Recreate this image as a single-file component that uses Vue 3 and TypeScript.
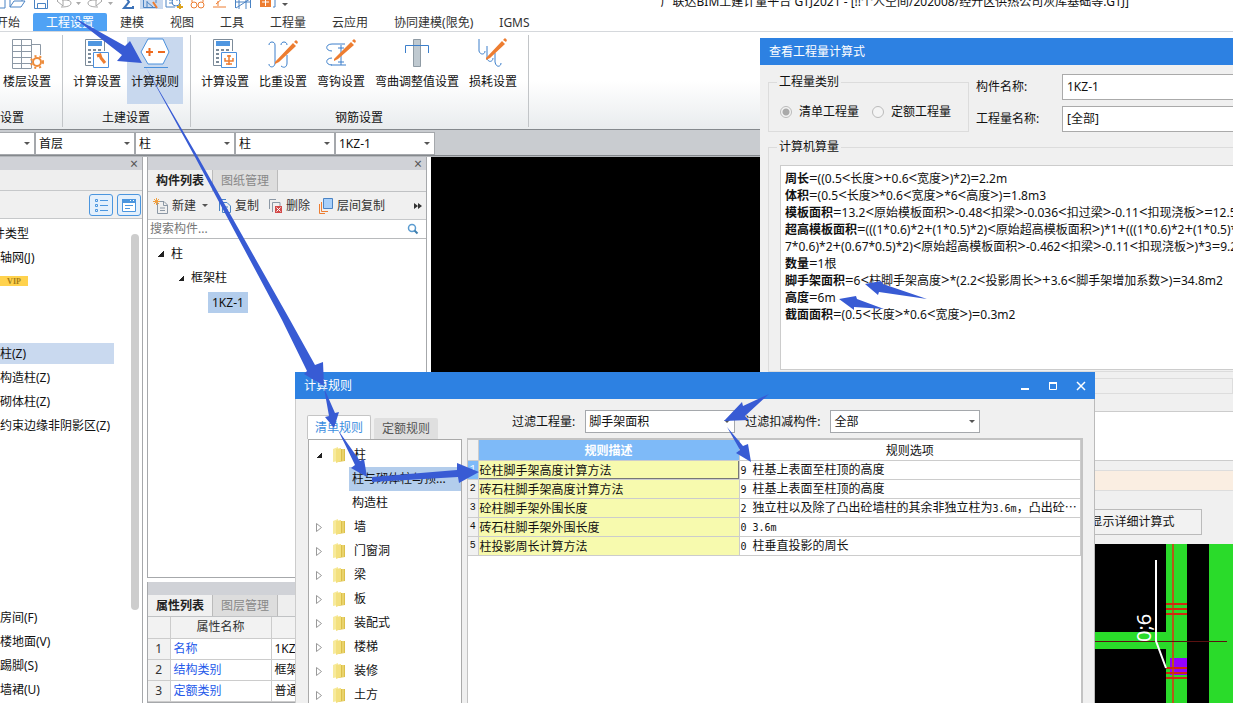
<script setup lang="ts">
import { ref } from 'vue'

interface Tool { label: string; icon: string; wide?: boolean; active?: boolean }
interface Group { title: string; cls: string; tools: Tool[] }
interface Formula { name: string; expr: string }
interface Rule { desc: string; opt: string; value: string }

const menus = ['开始', '工程设置', '建模', '视图', '工具', '工程量', '云应用', '协同建模(限免)', 'IGMS']
const activeMenu = ref('工程设置')

const groups: Group[] = [
  { title: '设置', cls: 'g-first', tools: [{ label: '楼层设置', icon: 'floor' }] },
  { title: '土建设置', cls: '', tools: [{ label: '计算设置', icon: 'calc' }, { label: '计算规则', icon: 'rule', active: true }] },
  {
    title: '钢筋设置', cls: '', tools: [
      { label: '计算设置', icon: 'calc2' }, { label: '比重设置', icon: 'weight' }, { label: '弯钩设置', icon: 'hook' },
      { label: '弯曲调整值设置', icon: 'bend', wide: true }, { label: '损耗设置', icon: 'loss' },
    ],
  },
]

const combos = [
  { label: '工程', value: '' }, { label: '楼层', value: '首层' }, { label: '类别', value: '柱' },
  { label: '类型', value: '柱' }, { label: '构件', value: '1KZ-1' },
]

const navItems = ['构件类型', '轴网(J)', 'VIP', '', '', '柱(Z)', '构造柱(Z)', '砌体柱(Z)', '约束边缘非阴影区(Z)',
  '', '', '', '', '', '', '', '房间(F)', '楼地面(V)', '踢脚(S)', '墙裙(U)']

const props = [['名称', '1KZ-1'], ['结构类别', '框架柱'], ['定额类别', '普通柱'], ['', '']]

const formulas: Formula[] = [
  { name: '周长', expr: '=((0.5<长度>+0.6<宽度>)*2)=2.2m' },
  { name: '体积', expr: '=(0.5<长度>*0.6<宽度>*6<高度>)=1.8m3' },
  { name: '模板面积', expr: '=13.2<原始模板面积>-0.48<扣梁>-0.036<扣过梁>-0.11<扣现浇板>=12.574m2' },
  { name: '超高模板面积', expr: '=(((1*0.6)*2+(1*0.5)*2)<原始超高模板面积>)*1+(((1*0.6)*2+(1*0.5)*2)' },
  { name: '', expr: '7*0.6)*2+(0.67*0.5)*2)<原始超高模板面积>-0.462<扣梁>-0.11<扣现浇板>)*3=9.284m2' },
  { name: '数量', expr: '=1根' },
  { name: '脚手架面积', expr: '=6<柱脚手架高度>*(2.2<投影周长>+3.6<脚手架增加系数>)=34.8m2' },
  { name: '高度', expr: '=6m' },
  { name: '截面面积', expr: '=(0.5<长度>*0.6<宽度>)=0.3m2' },
]
const pieces = (s: string): string[] => s.split(/([<>=+]+)/).filter(Boolean)
const isOp = (s: string): boolean => /^[<>=+]+$/.test(s)

const treeItems = ['墙', '门窗洞', '梁', '板', '装配式', '楼梯', '装修', '土方']

const rules: Rule[] = [
  { desc: '砼柱脚手架高度计算方法', opt: '9', value: '柱基上表面至柱顶的高度' },
  { desc: '砖石柱脚手架高度计算方法', opt: '9', value: '柱基上表面至柱顶的高度' },
  { desc: '砼柱脚手架外围长度', opt: '2', value: '独立柱以及除了凸出砼墙柱的其余非独立柱为3.6m，凸出砼…' },
  { desc: '砖石柱脚手架外围长度', opt: '0', value: '3.6m' },
  { desc: '柱投影周长计算方法', opt: '0', value: '柱垂直投影的周长' },
]
const latinPieces = (s: string): string[] => s.split(/([0-9.a-z]+)/).filter(Boolean)
const isLatin = (s: string): boolean => /^[0-9.a-z]+$/.test(s)

const kind = ref('list')

const arrows = [
  '73,17 125,46 130,41 142,63 117,61 122,55',
  '145,66 198,157 290,320 315,365 323,362 324,386 304,374 307,371 282,320 195,157',
  '324,388 335,413 339,412 334,428 325,417 329,416',
  '338,430 360,461 364,459 367,477 351,468 355,465',
  '372,477 457,470 457,463 479,472 459,483 458,477 372,482',
  '769,394 743,406 742,402 724,421 749,420 745,416',
  '727,427 743,446 748,444 751,462 736,453 740,450',
  '927,299 883,284 881,281 865,284 878,295 879,292',
  '884,309 857,299 856,296 839,299 854,310 854,307',
]
</script>

<template>
  <div class="app">
    <header class="quick">
      <div class="quick-icons">
        <svg width="300" height="16" viewBox="0 0 300 16" fill="none" stroke="#4a83c4">
          <path d="M-3 3H5V15H-3" />
          <path d="M10 14V3H15L17 5H22V8M10 14L14 8H25L21 14Z" />
          <path d="M34.500 2.500H47.500V15.500H34.500ZM37.500 15V10.500H45.500V15" />
          <g stroke="#a6a6a6"><path d="M61 14C67 14 71 13 71 10C71 7 66 7 62 7M62 2V7M57 8L63 2V13Z" /><path d="M98 14C92 14 88 13 88 10C88 7 93 7 97 7M102 8L96 2V13Z" /></g>
          <path d="M76 9H81L78.500 12ZM108 9H113L110.500 12Z" fill="#aaa" stroke="none" />
          <path d="M133 13V15H124L129 9L124 2H133" stroke="#3c72b8" stroke-width="2" />
          <rect x="140" y="0" width="23" height="18" fill="#c9d9ef" stroke="none" />
          <path d="M143.500 2V14.500H157M143 5H156V10M147 8V14M147 9L153 14" />
          <path d="M153 9L157 15" stroke="#ed7d31" stroke-width="2" />
          <path d="M166 5V14H175M169 7H173M169 10H173M177 3V8" /><circle cx="176" cy="9" r="4" /><path d="M180 11V17M177 14H183" stroke="#dca21d" stroke-width="2" />
          <g stroke="#ed7d31"><circle cx="194" cy="12" r="3" /><circle cx="201" cy="12" r="3" /><path d="M192 9V4H196M199 4H203V9M213 14H226" /><path d="M216 11L223 5M218 8V13" /></g>
          <path d="M235.500 15V6H250.500V15M235 9H251M239 3V16M246 3V16M236 15L250 6" />
          <path d="M260 3H271V14H260Z" fill="#ed7d31" stroke="none" /><path d="M262 9H269M265.500 5V13" stroke="#fff" /><path d="M273 14H275V3" />
          <path d="M282 10H288L285 13Z" fill="#555" stroke="none" />
        </svg>
      </div>
      <span class="app-title">广联达BIM土建计量平台 GTJ2021 - [!!个人空间/202008/经开区供热公司灰库基础等.GTJ]</span>
    </header>

    <nav class="menus">
      <button v-for="m in menus" :key="m" type="button" :class="{ on: m === activeMenu }" @click="activeMenu = m">{{ m }}</button>
    </nav>

    <section class="ribbon">
      <div v-for="g in groups" :key="g.title" class="group" :class="g.cls">
        <div class="tools">
          <button v-for="(t, i) in g.tools" :key="i" type="button" class="tool" :class="{ wide: t.wide, on: t.active }">
            <svg width="34" height="32" viewBox="0 0 34 32" fill="none">
              <g v-if="t.icon === 'floor'">
                <path d="M2.500 2.500H21.500V31M2.500 2.500V31.500H21.500M2 8.500H21M2 14.500H21M2 20.500H21M2 26.500H21M11.500 2.500V31.500M21.500 7.500H30.500V18" stroke="#8c98a5" />
                <circle cx="27" cy="25" r="4" stroke="#ed8b3a" stroke-width="2" />
                <circle cx="27" cy="25" r="6" stroke="#ed8b3a" stroke-width="2" stroke-dasharray="2 3" />
              </g>
              <g v-else-if="t.icon === 'calc' || t.icon === 'calc2'">
                <path d="M5.500 2.500H24.500V14M5.500 2.500V28.500H13" stroke="#7c8b99" />
                <path d="M8 4H22V9H8Z" fill="#4f96e0" />
                <path d="M8 12H11V14H8ZM13 12H16V14H13ZM18 12H21V14H18ZM8 16H11V18H8ZM8 20H11V22H8ZM8 24H11V26H8Z" fill="#7c8b99" />
                <path d="M13.500 15.500H28.500V30.500H13.500Z" fill="#fff" stroke="#4a8fdd" />
                <path v-if="t.icon === 'calc'" d="M17 19L20 18L21 21L25 26" stroke="#ed7d31" stroke-width="3" />
                <path v-else d="M21 18V28M17 21V24H25V21M18 27H24M19 19H23" stroke="#ed7d31" stroke-width="1.500" />
              </g>
              <g v-else-if="t.icon === 'rule'">
                <path d="M3 15L10 2H25L31 15L25 27H10Z" fill="#fff" stroke="#4a90dc" />
                <path d="M6 30.500H30" stroke="#4a90dc" />
                <path d="M8 15H15M11.500 11V19M20 15H27" stroke="#ed6a1f" stroke-width="2" />
              </g>
              <g v-else-if="t.icon === 'weight'">
                <path d="M3 8C3 4 9 4 9 8V26C9 31 3 31 3 27M15 8C15 4 21 4 21 8M15 29C19 32 21 29 21 26V18" stroke="#3c7fcb" />
                <path d="M9 25L27 6L30 9L13 25L9 27ZM28 5L30 3L32 5L31 7Z" fill="#ed7d31" />
              </g>
              <g v-else-if="t.icon === 'hook'">
                <path d="M8 14C1 14 1 7 8 7H21M8 28C1 28 1 21 8 21M7 28H22M17 8V28M14 11H20M14 25H20" stroke="#3c7fcb" />
                <path d="M10 22L27 5L30 8L14 22L10 24ZM28 4L30 2L32 4L31 6Z" fill="#ed7d31" />
              </g>
              <g v-else-if="t.icon === 'bend'">
                <path d="M13.500 2.500H20.500V29.500H13.500Z" fill="#bfc9d0" stroke="#8f9ba4" />
                <path d="M5.500 16V8.500H28.500V16" stroke="#3c7fcb" />
              </g>
              <g v-else>
                <path d="M3 2V14C4 18 9 18 9 14M11 9V21C12 26 17 25 17 21M19 16V25C20 31 25 30 25 26" stroke="#3c7fcb" />
                <path d="M10 21L26 4L29 7L14 21L10 23ZM27 3L29 1L31 3L30 5Z" fill="#ed7d31" />
              </g>
            </svg>
            <span>{{ t.label }}</span>
          </button>
        </div>
        <div class="group-title">{{ g.title }}</div>
      </div>
    </section>

    <section class="combos">
      <span v-for="c in combos" :key="c.label" class="combo">
        <select :aria-label="c.label"><option>{{ c.value }}</option></select>
      </span>
    </section>

    <main class="work">
      <aside class="left">
        <div class="strip"><button type="button" class="x" aria-label="关闭导航">×</button></div>
        <div class="strip2"></div>
        <div class="views">
          <button type="button" aria-label="列表视图">
            <svg width="16" height="16" viewBox="0 0 16 16" stroke="#4b96df" fill="none"><path d="M7 3.500H15M7 8.500H15M7 13.500H15M2.500 2.500H4.500V4.500H2.500ZM2.500 7.500H4.500V9.500H2.500ZM2.500 12.500H4.500V14.500H2.500Z" /></svg>
          </button>
          <button type="button" aria-label="卡片视图">
            <svg width="16" height="16" viewBox="0 0 16 16" stroke="#4b96df" fill="none"><path d="M1.500 2.500H14.500V14.500H1.500Z" fill="#fff" /><path d="M1 4H15" stroke-width="4" /><path d="M9 3.500H10M12 3.500H13" stroke="#fff" /><path d="M4 8.500H12M4 11.500H9" /></svg>
          </button>
        </div>
        <div class="nav">
          <ul>
            <li v-for="(n, i) in navItems" :key="i" :class="{ cut: i === 0, on: i === 5 }">
              <span v-if="n === 'VIP'" class="vip">VIP</span><template v-else>{{ n }}</template>
            </li>
          </ul>
          <div class="thumb"></div>
        </div>
      </aside>

      <section class="mid">
        <div class="mid-top">
          <div class="strip"><button type="button" class="x" aria-label="关闭列表">×</button></div>
          <div class="tabs"><button type="button" class="on">构件列表</button><button type="button">图纸管理</button></div>
          <div class="bar">
            <button type="button">
              <svg width="16" height="16" viewBox="0 0 16 16" fill="none"><path d="M4.500 3.500H11L14.500 7V15.500H4.500ZM10.500 4V7.500H14M7 10H12M7 12.500H12" stroke="#8c98a5" /><path d="M1 1L6 6M6 1L1 6M3.500 0V7M0 3.500H7" stroke="#f0a040" /></svg>
              新建</button>
            <i class="caret"></i>
            <button type="button" class="b-copy">
              <svg width="14" height="16" viewBox="0 0 14 16"><path d="M1.500 13V1.500H8M4.500 4.500H9L12.500 8V14.500H4.500ZM7 9H10M7 12H10" fill="none" stroke="#4a83c4" /></svg>
              复制</button>
            <button type="button" class="b-del">
              <svg width="15" height="16" viewBox="0 0 15 16" fill="none"><path d="M1.500 11V1.500H8M4.500 14V4.500H12V8" stroke="#8c98a5" /><path d="M7 8H14V15H7Z" fill="#d34b4b" /><path d="M8.500 9.500L12.500 13.500M12.500 9.500L8.500 13.500" stroke="#fff" /></svg>
              删除</button>
            <button type="button" class="b-layer">
              <svg width="15" height="16" viewBox="0 0 15 16" fill="none"><path d="M.5 6V15.500H6M2.500 4V13.500H9" stroke="#ed7d31" /><path d="M4.500 .5H13.500V10.500H4.500Z" fill="#a9d0fa" stroke="#4a83c4" /></svg>
              层间复制</button>
            <button type="button" class="more" aria-label="更多"><svg width="8" height="6" viewBox="0 0 8 6"><path d="M0 0L4 3L0 6ZM4 0L8 3L4 6Z" fill="#333" /></svg></button>
          </div>
          <div class="search">
            <input type="text" placeholder="搜索构件..." aria-label="搜索构件" />
            <svg width="12" height="12" viewBox="0 0 12 12" fill="none"><circle cx="5" cy="5" r="3.500" stroke="#5a9bd0" stroke-width="1.500" /><path d="M7.500 7.500L10.500 10.500" stroke="#3f7fae" stroke-width="2" /></svg>
          </div>
          <ul class="mtree">
            <li><i class="open"></i>柱</li>
            <li class="l2"><i class="open"></i>框架柱</li>
            <li class="l3"><span>1KZ-1</span></li>
          </ul>
        </div>
        <div class="mid-bottom">
          <div class="strip"></div>
          <div class="tabs"><button type="button" class="on">属性列表</button><button type="button">图层管理</button></div>
          <table class="props">
            <thead><tr><th class="n"></th><th class="k">属性名称</th><th>属性值</th></tr></thead>
            <tbody>
              <tr v-for="(p, i) in props" :key="i"><th class="n">{{ i + 1 }}</th><td class="k link">{{ p[0] }}</td><td>{{ p[1] }}</td></tr>
            </tbody>
          </table>
        </div>
      </section>
      <div class="viewport"></div>
    </main>

    <section class="win quantity" role="dialog" aria-label="查看工程量计算式">
      <h2>查看工程量计算式</h2>
      <div class="q-head">
        <fieldset>
          <legend>工程量类别</legend>
          <label><input v-model="kind" type="radio" name="kind" value="list" />清单工程量</label>
          <label><input v-model="kind" type="radio" name="kind" value="quota" />定额工程量</label>
        </fieldset>
        <div class="q-form">
          <label for="q-name">构件名称:</label><select id="q-name"><option>1KZ-1</option></select>
          <label for="q-kind">工程量名称:</label><select id="q-kind"><option>[全部]</option></select>
        </div>
      </div>
      <fieldset class="calc">
        <legend>计算机算量</legend>
        <div class="paper">
          <p v-for="(f, i) in formulas" :key="i"><b>{{ f.name }}</b><span v-for="(s, j) in pieces(f.expr)" :key="j" :class="{ op: isOp(s) }">{{ s }}</span></p>
        </div>
      </fieldset>
      <div class="band"></div>
      <div class="result"></div>
      <div class="peach"></div>
      <div class="q-foot"><button type="button">显示详细计算式</button></div>
      <svg class="cad" width="100%" height="160">
        <path d="M0 88H406V105H0ZM406 0H427V160H406ZM449 0H1200V160H449Z" fill="#2adb2a" />
        <path d="M410 114H427V131H410Z" fill="#9500ff" />
        <path d="M413 0V160" stroke="#b55a18" stroke-width="2" />
        <path d="M406 60H427M406 65H427M406 70H427M406 124H427M406 129H427M406 134H427" stroke="#d02a10" stroke-width="2" />
        <path d="M0 97.500H467" stroke="#5a1010" />
        <path d="M396 16V97L406 124" stroke="#fff" stroke-width="2" fill="none" />
        <text transform="translate(391 98) rotate(-90)" fill="#fff" font-size="20">0;6</text>
      </svg>
    </section>

    <section class="win rules" role="dialog" aria-label="计算规则">
      <header>
        <h2>计算规则</h2>
        <button type="button" aria-label="最小化"><svg width="10" height="10" viewBox="0 0 10 10"><path d="M1 8H9" stroke="#fff" stroke-width="2" /></svg></button>
        <button type="button" aria-label="最大化"><svg width="10" height="10" viewBox="0 0 10 10" fill="none"><path d="M1.500 2V8.500H8.500V2" stroke="#fff" /><path d="M1 2H9" stroke="#fff" stroke-width="2" /></svg></button>
        <button type="button" aria-label="关闭"><svg width="10" height="10" viewBox="0 0 10 10"><path d="M1 1L9 9M9 1L1 9" stroke="#fff" stroke-width="1.500" /></svg></button>
      </header>
      <div class="r-body">
        <div class="r-left">
          <div class="r-tabs"><button type="button" class="on">清单规则</button><button type="button">定额规则</button></div>
          <ul class="rtree">
            <li><i class="open"></i><svg class="folder" width="14" height="16" viewBox="0 0 14 16"><path d="M1 2L6 0V14L1 15Z" fill="#f7ea9c" /><path d="M6 2H13V14L6 15Z" fill="#dcc04a" /><path d="M4 2L9 1V14L4 16Z" fill="#f3e07e" /><path d="M11 2V14" stroke="#f6e58e" /></svg>柱</li>
            <li class="sub"><span class="on">柱与砌体柱与预...</span></li>
            <li class="sub"><span>构造柱</span></li>
            <li v-for="t in treeItems" :key="t">
              <svg class="closed" width="6" height="9" viewBox="0 0 6 9"><path d="M.5 .5L5.500 4.500L.5 8.500Z" fill="#fff" stroke="#999" /></svg>
              <svg class="folder" width="14" height="16" viewBox="0 0 14 16"><path d="M1 2L6 0V14L1 15Z" fill="#f7ea9c" /><path d="M6 2H13V14L6 15Z" fill="#dcc04a" /><path d="M4 2L9 1V14L4 16Z" fill="#f3e07e" /><path d="M11 2V14" stroke="#f6e58e" /></svg>{{ t }}
            </li>
          </ul>
        </div>
        <div class="r-right">
          <div class="filters">
            <label for="f-q">过滤工程量:</label>
            <span class="combo"><select id="f-q"><option>脚手架面积</option></select></span>
            <label for="f-c">过滤扣减构件:</label>
            <span class="combo"><select id="f-c"><option>全部</option></select></span>
          </div>
          <div class="grid">
            <table>
              <thead><tr><th class="i"></th><th class="d">规则描述</th><th class="o">规则选项</th></tr></thead>
              <tbody>
                <tr v-for="(r, i) in rules" :key="i" :class="{ sel: i === 0 }">
                  <th class="i">{{ i + 1 }}</th>
                  <td class="d">{{ r.desc }}</td>
                  <td class="o"><div><span class="lat num">{{ r.opt }}</span><span v-for="(s, j) in latinPieces(r.value)" :key="j" :class="{ lat: isLatin(s) }">{{ s }}</span></div></td>
                </tr>
              </tbody>
            </table>
          </div>
        </div>
      </div>
    </section>

    <svg class="marks" width="1233" height="703" viewBox="0 0 1233 703" aria-hidden="true">
      <polygon v-for="a in arrows" :key="a" :points="a" fill="#385bd4" />
    </svg>
  </div>
</template>

<style>
html, body { margin: 0; overflow: hidden; }
</style>

<style scoped>
.app {
  position: relative; display: flex; flex-direction: column; height: 100vh; overflow: hidden; background: #fff;
  font: 12px/16px "Noto Sans", "Noto Sans CJK SC", sans-serif; color: #111;
}
.app *, .app *::before, .app *::after { box-sizing: border-box; }
button, select, input { font: inherit; color: inherit; margin: 0; padding: 0; border: 0; background: none; border-radius: 0; }
select { appearance: none; }
ul { list-style: none; margin: 0; padding: 0; }
svg { display: block; flex: none; }
p, h2 { margin: 0; font-size: 12px; font-weight: 400; }

.quick { display: flex; align-items: flex-end; justify-content: space-between; height: 13px; flex: none; }
.quick-icons { padding-bottom: 4px; }
.app-title { line-height: 20px; margin: 0 104px 1px 0; white-space: nowrap; }

.menus { display: flex; height: 19px; flex: none; margin-left: -17px; border-bottom: 1px solid #d5d8dc; }
.menus button { padding: 0 13px; line-height: 18px; padding-top: 1px; color: #333; white-space: nowrap; }
.menus .on { background: #4fa2f5; color: #fff; border-radius: 2px 2px 0 0; }

.ribbon { display: flex; height: 98px; flex: none; background: linear-gradient(#fff 50%, #e9ecee); border-bottom: 1px solid #85898d; }
.group { display: flex; flex-direction: column; height: 92px; margin-top: 3px; padding: 2px 7px 0 6px; border-right: 1px solid #c2c5c8; }
.g-first { width: 63px; align-items: flex-end; }
.g-first .group-title { align-self: flex-start; margin-left: -6px; }
.tools { display: flex; gap: 2px; }
.tool { display: flex; flex-direction: column; align-items: center; width: 56px; height: 67px; white-space: nowrap; }
.tool.wide { width: 92px; }
.tool.on { background: #c8d8ee; }
.tool span { margin-top: 5px; }
.group-title { text-align: center; margin-top: 6px; }

.combos { display: flex; height: 26px; flex: none; padding-top: 2px; margin-left: -65px; background: #c9ccd0; border-bottom: 1px solid #85898d; }
.combo { position: relative; display: block; }
.combo select { display: block; width: 100%; height: 23px; padding: 0 3px; background: #fff; border: 1px solid #a5a8ac; }
.combo::after { content: ""; position: absolute; right: 5px; top: 10px; border: 3px solid transparent; border-top-color: #555; border-bottom: 0; }
.combos .combo { width: 100px; }

.work { display: flex; flex: 1; min-height: 0; border-top: 1px solid #b4b7bb; }
.strip { height: 13px; background: #d0d2d7; display: flex; justify-content: flex-end; align-items: center; padding-right: 4px; flex: none; }
.x { font-size: 14px; line-height: 12px; color: #555; }
.left { width: 143px; display: flex; flex-direction: column; flex: none; border-right: 1px solid #a6a8ab; }
.strip2 { height: 21px; background: #eee; border-bottom: 1px solid #c6c8ca; flex: none; }
.views { display: flex; justify-content: flex-end; align-items: center; gap: 4px; height: 28px; padding-right: 1px; background: #f0f0f0; border-bottom: 1px solid #c6c8ca; flex: none; }
.views button { width: 24px; height: 22px; display: grid; place-items: center; border: 1px solid #4b96df; border-radius: 3px; background: #e4f0fc; }
.nav { display: flex; justify-content: space-between; flex: 1; min-height: 0; padding-top: 3px; overflow: hidden; }
.nav ul { flex: 1; }
.nav li { height: 24px; line-height: 24px; white-space: nowrap; }
.nav .cut { margin-left: -19px; }
.nav .on { width: 114px; background: linear-gradient(#c9d9ef, #c9d9ef) 0 1px / 100% 21px no-repeat; }
.vip { display: block; width: 28px; height: 10px; margin-top: 6px; background: #ffd24d; color: #a37b17; font: bold 8px/11px "Liberation Serif", serif; text-align: center; }
.nav li:has(.vip) { display: flex; }
.thumb { width: 8px; height: 376px; margin: 12px 3px 0 0; border-radius: 4px; background: #cdcdcd; flex: none; }

.mid { width: 280px; margin-left: 4px; display: flex; flex-direction: column; flex: none; gap: 4px; }
.mid-top { display: flex; flex-direction: column; height: 421px; border: 1px solid #a6a8ab; border-top: 0; }
.mid-bottom { border: 1px solid #a6a8ab; border-top: 0; flex: 1; min-height: 0; overflow: hidden; }
.tabs { display: flex; height: 22px; background: #eee; border-bottom: 1px solid #c0c2c4; flex: none; }
.tabs button { width: 65px; color: #888; background: #ddd; border-right: 1px solid #bbb; }
.tabs .on { color: #222; font-weight: 700; background: #f0f0f0; }
.bar { display: flex; align-items: center; height: 28px; padding: 0 4px 0 5px; background: #f0f0f0; color: #333; border-bottom: 1px solid #c6c8ca; flex: none; }
.bar button { display: flex; align-items: center; gap: 3px; white-space: nowrap; }
.caret { margin: 0 10px 0 6px; border: 3px solid transparent; border-top-color: #555; border-bottom: 0; }
.b-del, .b-layer { margin-left: 9px; }
.bar .more { margin-left: auto; }
.search { display: flex; align-items: center; height: 19px; padding-right: 7px; border-bottom: 1px solid #b8babc; flex: none; }
.search input { flex: 1; min-width: 0; padding-left: 2px; outline: 0; }
.search input::placeholder { color: #777; opacity: 1; }
.mtree { padding: 3px 0 0 10px; }
.mtree li { display: flex; align-items: center; height: 24px; }
.mtree .l2 { padding-left: 20px; }
.mtree .l3 { padding-left: 50px; }
.l3 span { padding: 2px 4px; line-height: 17px; background: #b3cdec; }
.open { flex: none; width: 6px; height: 6px; margin-right: 7px; background: linear-gradient(135deg, transparent 50%, #222 50%); }
.props { width: 100%; table-layout: fixed; border-collapse: collapse; }
.props tr { height: 21px; }
.props th, .props td { padding: 0 3px; border: 1px solid #ccc; border-left: 0; border-top: 0; text-align: left; font-weight: 400; line-height: 16px; }
.props th { background: #f2f2f2; color: #333; text-align: center; }
.props .n { width: 22px; }
.props .k { width: 101px; }
.props .link { color: #2459ea; }
.viewport { flex: 1; margin-left: 4px; background: #000; }

.win { position: absolute; background: #f0f0f0; }
.win h2 { color: #fff; padding-left: 9px; line-height: 27px; }
.quantity { left: 760px; right: 0; top: 38px; bottom: 0; overflow: hidden; display: flex; flex-direction: column; }
.quantity > h2 { background: #2d81e2; flex: none; }
.q-head { display: flex; gap: 7px; padding: 9px 0 0 8px; flex: none; }
fieldset { min-width: 0; margin: 0; padding: 0; border: 1px solid #dcdcdc; }
legend { padding: 0 2px; margin-left: -3px; line-height: 16px; }
.q-head fieldset { width: 201px; height: 58px; padding: 11px 0 0 11px; display: flex; gap: 13px; white-space: nowrap; }
.q-head fieldset label { display: flex; align-items: center; gap: 7px; height: 22px; }
.q-head input { appearance: none; width: 12px; height: 12px; border: 1px solid #bbb; border-radius: 50%; background: #f4f4f4; }
.q-head input:checked { background: radial-gradient(#aaa 3px, #f4f4f4 4px); }
.q-form { flex: 1; display: grid; grid-template-columns: 86px 1fr; grid-auto-rows: 26px; row-gap: 6px; align-items: center; white-space: nowrap; margin-right: -2px; }
.q-form select { height: 26px; padding: 0 4px; background: #fff; border: 1px solid #aaa; }
.calc { height: 233px; margin: 7px -2px 0 8px; padding: 10px 0 0 11px; flex: none; }
.paper { height: 205px; padding: 3px 0 0 4px; background: #fff; border: 1px solid #ccc; overflow: hidden; }
.paper p { height: 17px; line-height: 17px; white-space: nowrap; }
.paper .op { font-size: 15px; line-height: 16px; }
.band { height: 16px; margin-top: 6px; border: 1px solid #ddd; flex: none; }
.result { height: 50px; margin: 17px -2px 0 0; background: #fff; border: 1px solid #ccc; flex: none; }
.peach { height: 21px; margin: 9px -2px 0 0; background: #faeee2; border: 1px solid #ddd; flex: none; }
.q-foot { display: flex; height: 53px; padding: 18px 0 0 305px; flex: none; }
.q-foot button { width: 137px; height: 26px; padding-right: 2px; border: 1px solid #bbb; background: #f2f2f2; }
.cad { background: #000; }

.rules { left: 295px; width: 800px; top: 372px; bottom: 0; display: flex; flex-direction: column; border-right: 1px solid #bbb; border-left: 1px solid #ccc; }
.rules header { display: flex; height: 27px; background: #2d81e2; flex: none; margin: 0 -1px; padding-right: 9px; gap: 18px; align-items: center; }
.rules h2 { flex: 1; }
.r-body { flex: 1; min-height: 0; display: flex; gap: 5px; padding: 11px 11px 0 12px; }
.r-left { width: 154px; flex: none; display: flex; flex-direction: column; }
.r-tabs { display: flex; align-items: flex-end; gap: 3px; height: 29px; flex: none; margin-left: -1px; }
.r-tabs button { width: 64px; height: 21px; background: #dfdfdf; color: #555; border-radius: 2px 2px 0 0; }
.r-tabs .on { height: 24px; background: #fff; color: #3b8ee0; border: 1px solid #c5c5c5; border-bottom: 0; }
.rtree { flex: 1; min-height: 0; overflow: hidden; background: #fff; border: 1px solid #aaa; border-bottom: 0; padding: 3px 0 0 7px; }
.rtree li { display: flex; align-items: center; height: 24px; white-space: nowrap; }
.rtree .open { margin-right: 10px; }
.closed { margin-right: 10px; }
.folder { margin-right: 8px; }
.rtree .sub { padding-left: 33px; }
.sub span { flex: 1; padding-left: 3px; line-height: 24px; }
.sub .on { background: #b3cdec; }
.r-right { flex: 1; min-width: 0; display: flex; flex-direction: column; }
.filters { display: flex; align-items: center; height: 23px; padding-left: 45px; flex: none; white-space: nowrap; }
.filters .combo { width: 150px; margin-left: 10px; }
.filters .combo + label { margin-left: 10px; }
.grid { flex: 1; min-height: 0; margin-top: 5px; background: #fff; border: 2px solid #c3c3c3; border-left-width: 1px; border-bottom: 0; overflow: hidden; }
.grid table { width: 100%; table-layout: fixed; border-collapse: collapse; font-family: "Noto Sans CJK SC", sans-serif; }
.grid tr { height: 19px; }
.grid thead tr { height: 20px; }
.grid th, .grid td { padding: 0 2px; border: 1px solid #ccc; border-top: 0; border-left: 0; line-height: 16px; text-align: left; font-weight: 400; white-space: nowrap; overflow: hidden; }
.grid .i { width: 10px; padding: 0; text-align: center; background: #f1f1f1; font: 10px/16px "Liberation Mono", monospace; }
.grid td.d { padding-left: 1px; background: #f7faae; }
.grid th.d { width: 261px; text-align: center; background: #7ebaf8; color: #fff; font-weight: 700; }
.grid th.o { text-align: center; }
.grid td.o { padding-left: 1px; }
.grid .sel .i { background: #7ebaf8; color: #fff; }
.grid .sel td.d { box-shadow: inset -1px -1px #777; }
.lat { font: 10px/16px "DejaVu Sans Mono", monospace; }
.num { margin-right: 6px; }

.marks { position: absolute; left: 0; top: 0; pointer-events: none; }
</style>
